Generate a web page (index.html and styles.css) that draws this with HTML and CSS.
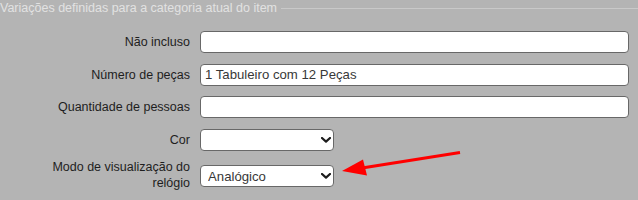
FILE: index.html
```html
<!DOCTYPE html>
<html lang="pt">
<head>
<meta charset="utf-8">
<title>Variações</title>
<link rel="stylesheet" href="styles.css">
</head>
<body>
<div class="panel">
  <div class="legend-row">
    <span class="legend">Variações definidas para a categoria atual do item</span>
    <span class="legend-line"></span>
  </div>
  <div class="form">
    <label class="lbl" for="f1">Não incluso</label>
    <input class="txt" id="f1" type="text">

    <label class="lbl" for="f2">Número de peças</label>
    <input class="txt" id="f2" type="text" value="1 Tabuleiro com 12 Peças">

    <label class="lbl" for="f3">Quantidade de pessoas</label>
    <input class="txt" id="f3" type="text">

    <label class="lbl" for="f4">Cor</label>
    <div class="sel-wrap">
      <select class="sel" id="f4"><option></option></select>
      <svg class="chev" width="10" height="6" viewBox="0 0 10 6"><path d="M1 1 L5 4.6 L9 1" fill="none" stroke="#1c1c1c" stroke-width="2.2" stroke-linecap="round" stroke-linejoin="round"/></svg>
    </div>

    <label class="lbl lbl-tall" for="f5">Modo de visualização do relógio</label>
    <div class="sel-wrap">
      <select class="sel" id="f5"><option>Analógico</option></select>
      <svg class="chev" width="10" height="6" viewBox="0 0 10 6"><path d="M1 1 L5 4.6 L9 1" fill="none" stroke="#1c1c1c" stroke-width="2.2" stroke-linecap="round" stroke-linejoin="round"/></svg>
    </div>
  </div>
</div>
<svg class="annot" width="638" height="200" viewBox="0 0 638 200">
  <line x1="460" y1="152.5" x2="362" y2="168" stroke="#ff0000" stroke-width="3.2"/>
  <polygon points="342,171 363,159.5 367,175.5" fill="#ff0000"/>
</svg>
</body>
</html>
```
FILE: styles.css
```css
html, body {
  margin: 0;
  padding: 0;
}
body {
  width: 638px;
  height: 200px;
  overflow: hidden;
  background: #b4b4b4;
  font-family: "Liberation Sans", Arial, sans-serif;
  font-size: 12.5px;
  color: #1e1e1e;
}
.panel {
  padding-right: 9px;
}
.legend-row {
  display: flex;
  align-items: center;
  height: 16px;
  margin-right: -9px;
}
.legend {
  color: #e2e2e2;
  line-height: 16px;
  white-space: nowrap;
}
.legend-line {
  flex: 1;
  height: 1px;
  margin-left: 4px;
  background: #c9c9c9;
}
.form {
  display: grid;
  grid-template-columns: 190px 1fr;
  column-gap: 10px;
  row-gap: 10.5px;
  align-items: center;
  padding-top: 15px;
}
.lbl {
  text-align: right;
  line-height: 16px;
  padding-left: 40px;
}
.lbl-tall {
  margin-top: -2px;
}
.txt {
  box-sizing: border-box;
  height: 22px;
  width: 100%;
  margin: 0;
  padding: 0 4px;
  border: 1px solid #686868;
  border-radius: 4px;
  background: #fff;
  font-family: "Liberation Sans", Arial, sans-serif;
  font-size: 13.2px;
  color: #383838;
  outline: none;
}
.sel-wrap {
  position: relative;
  width: 134px;
  height: 22px;
}
.sel {
  -webkit-appearance: none;
  appearance: none;
  box-sizing: border-box;
  display: block;
  width: 134px;
  height: 22px;
  margin: 0;
  padding: 0 0 0 7px;
  border: 1px solid #686868;
  border-radius: 4px;
  background: #fff;
  font-family: "Liberation Sans", Arial, sans-serif;
  font-size: 13.2px;
  color: #383838;
  outline: none;
}
.chev {
  position: absolute;
  right: 3px;
  top: 8px;
  pointer-events: none;
}
.annot {
  position: absolute;
  left: 0;
  top: 0;
  pointer-events: none;
}
```
